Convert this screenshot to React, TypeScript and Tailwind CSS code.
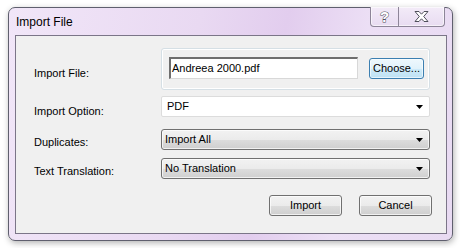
import React from 'react';

const btn =
  'flex items-center justify-center border border-[#707070] rounded-[3px] text-[11px] text-black bg-[linear-gradient(to_bottom,#f2f2f2_0%,#ebebeb_50%,#dddddd_51%,#cfcfcf_100%)] shadow-[inset_0_0_0_1px_rgba(255,255,255,0.7)]';

const Arrow = () => (
  <svg width="7" height="4" viewBox="0 0 7 4" className="shrink-0">
    <path d="M0 0 H7 L3.5 4 Z" fill="#000" />
  </svg>
);

const Combo: React.FC<{ value: string; flat?: boolean }> = ({ value, flat }) => (
  <div
    className={
      flat
        ? 'h-[21px] w-[269px] flex items-center justify-between pl-[5px] pr-[6px] bg-white border border-[#dcdcdc] rounded-[2px] text-[11px]'
        : 'h-[21px] w-[269px] flex items-center justify-between pl-[3px] pr-[6px] border border-[#707070] rounded-[3px] text-[11px] bg-[linear-gradient(to_bottom,#f2f2f2_0%,#ebebeb_50%,#dddddd_51%,#cfcfcf_100%)] shadow-[inset_0_0_0_1px_rgba(255,255,255,0.7)]'
    }
  >
    <span>{value}</span>
    <Arrow />
  </div>
);

const App: React.FC = () => {
  return (
    <div className="w-[460px] h-[248px] bg-white pt-[7px] pl-[8px] font-['Liberation_Sans',Arial,sans-serif] text-black">
      <div className="relative w-[445px] h-[234px] border border-[#5f5f6e] rounded-[7px] bg-[linear-gradient(100deg,#f1e6f8_0%,#e9d9f2_40%,#e2cdee_58%,#ecdff5_75%,#e8daf2_100%)] shadow-[1px_2px_6px_rgba(0,0,0,0.3)] pl-[6px] pr-[5px] flex flex-col">
        {/* title bar */}
        <div className="h-[27px] flex items-center pl-[1px] text-[12px] text-black">Import File</div>

        {/* caption buttons */}
        <div className="absolute top-[-1px] right-[7px] h-[20px] flex border border-[#8d8598] border-t-0 rounded-b-[4px] bg-[linear-gradient(to_bottom,#f3ebf8,#e8dcf1)] shadow-[inset_0_0_0_1px_rgba(255,255,255,0.6)]">
          <div className="w-[28px] h-full flex items-center justify-center border-r border-[#8d8598] text-[15px] font-bold text-white [-webkit-text-stroke:1px_#4f4f5a] [paint-order:stroke] leading-none pb-[1px]">
            ?
          </div>
          <div className="w-[45px] h-full flex items-center justify-center">
            <svg width="15" height="11" viewBox="0 0 15 11">
              <path
                d="M1 0.5 H5 L7.5 3.2 L10 0.5 H14 L9.7 5.5 L14 10.5 H10 L7.5 7.8 L5 10.5 H1 L5.3 5.5 Z"
                fill="#fff"
                stroke="#4f4f5a"
                strokeWidth="1"
                strokeLinejoin="round"
              />
            </svg>
          </div>
        </div>

        {/* client area */}
        <div className="h-[199px] border border-[#7b7588] bg-[#f0f0f0] pl-[18px] flex flex-col">
          <div className="flex mt-[12px]">
            <div className="w-[127px] text-[11px] leading-[13px] mt-[19px]">Import File:</div>
            <div className="w-[269px] h-[42px] border border-[#d5dfe5] rounded-[3px] shadow-[inset_0_0_0_1px_#ffffff] flex items-start pl-[7px] pt-[8px]">
              <div className="w-[189px] h-[22px] bg-white border border-[#6e6e6e] border-b-[#d8d8d8] border-r-[#d8d8d8] border-t-2 border-l-2 flex items-center pl-[1px] text-[11px] leading-[13px]">
                Andreea 2000.pdf
              </div>
              <div className="ml-[11px] mt-[1px] w-[55px] h-[21px] flex items-center justify-center border border-[#3c7fb1] rounded-[3px] text-[11px] bg-[linear-gradient(to_bottom,#eef8fd_0%,#e1f2fb_50%,#cdeaf9_51%,#bfe2f4_100%)] shadow-[inset_0_0_0_1px_rgba(255,255,255,0.6)]">
                Choose...
              </div>
            </div>
          </div>

          <div className="flex mt-[6px]">
            <div className="w-[127px] text-[11px] leading-[13px] mt-[9px]">Import Option:</div>
            <Combo value="PDF" flat />
          </div>

          <div className="flex mt-[11px]">
            <div className="w-[127px] text-[11px] leading-[13px] mt-[7px]">Duplicates:</div>
            <Combo value="Import All" />
          </div>

          <div className="flex mt-[8px]">
            <div className="w-[127px] text-[11px] leading-[13px] mt-[7px]">Text Translation:</div>
            <Combo value="No Translation" />
          </div>

          <div className="flex justify-end gap-[17px] mt-[16px] pr-[14px]">
            <div className={`${btn} w-[73px] h-[21px]`}>Import</div>
            <div className={`${btn} w-[73px] h-[21px]`}>Cancel</div>
          </div>
        </div>
      </div>
    </div>
  );
};

export default App;
